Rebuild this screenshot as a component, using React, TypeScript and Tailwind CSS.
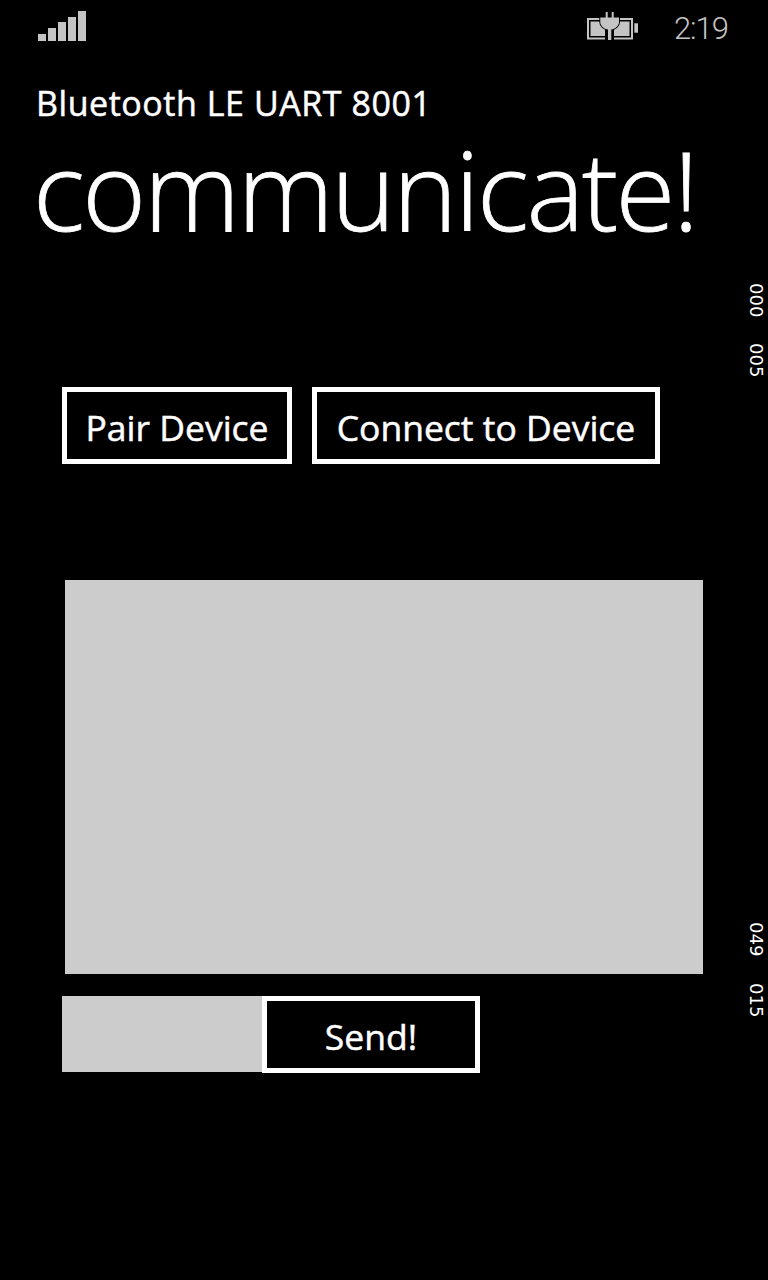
const font = "font-['Open_Sans','Noto_Sans',sans-serif]";

function SignalBars() {
  return (
    <div className="flex items-end gap-[2px]">
      <div className="h-[7px] w-[8px] bg-[#c4c4c4]" />
      <div className="h-[13px] w-[8px] bg-[#c4c4c4]" />
      <div className="h-[19px] w-[8px] bg-[#c4c4c4]" />
      <div className="h-[24px] w-[8px] bg-[#c4c4c4]" />
      <div className="h-[30px] w-[8px] bg-[#c4c4c4]" />
    </div>
  );
}

function BatteryIcon() {
  return (
    <svg width="60" height="36" viewBox="0 0 60 36" fill="#c4c4c4">
      <path d="M4 10H17V12H6V29.5H22V31.5H4Z" />
      <path d="M36 10H50V31.5H31V29.5H48V12H36Z" />
      <rect x="7.5" y="13.5" width="14.5" height="14.5" />
      <rect x="31" y="13.5" width="15.5" height="14.5" />
      <rect x="51.3" y="15.3" width="3.7" height="9.4" />
      <path
        d="M22.7 4H24.7V9.5H28.7V4H30.7V9.5H36V14C36 18 32 21 28.3 21.5V32H25V21.5C21 21 17.3 18 17.3 14V9.5H22.7Z"
        stroke="#000"
        strokeWidth="2"
        paintOrder="stroke"
      />
    </svg>
  );
}

function OutlineButton({ label, className }: { label: string; className: string }) {
  return (
    <button className={`h-[77px] border-[5px] border-white bg-black pt-[3px] text-[35.5px] leading-[40px] text-white [-webkit-text-stroke:0.5px_white] ${className}`}>
      {label}
    </button>
  );
}

export default function App() {
  return (
    <div className={`relative h-[1280px] w-[768px] overflow-hidden bg-black text-white ${font}`}>
      {/* status bar */}
      <div className="flex h-[48px] items-start justify-between pl-[38px] pr-[40px]">
        <div className="pt-[11px]">
          <SignalBars />
        </div>
        <div className="flex items-start">
          <div className="pt-[8px]">
            <BatteryIcon />
          </div>
          <span className="ml-[31px] pt-[8px] font-['Roboto',sans-serif] text-[31px] leading-[42px] font-light tracking-[-1px] text-[#c4c4c4]">2:19</span>
        </div>
      </div>

      <div className="pl-[36px] pt-[32px] text-[34px] leading-[46px] tracking-[0.55px] whitespace-nowrap [-webkit-text-stroke:0.5px_white]">
        Bluetooth LE UART 8001
      </div>
      <div className="ml-[33px] mt-[4px] h-[117px] text-[109px] leading-[117px] font-light tracking-[-2.5px] whitespace-nowrap [-webkit-text-stroke:0.8px_white]">
        communicate!
      </div>

      <div className="mt-[140px] flex gap-[20px] pl-[62px]">
        <OutlineButton label="Pair Device" className="w-[230px]" />
        <OutlineButton label="Connect to Device" className="w-[348px]" />
      </div>

      <div className="ml-[65px] mt-[116px] h-[394px] w-[638px] bg-[#cccccc]" />

      <div className="ml-[62px] mt-[22px] flex">
        <div className="h-[76px] w-[200px] bg-[#cccccc]" />
        <OutlineButton label="Send!" className="w-[218px]" />
      </div>

      {/* frame rate counters */}
      <span className="absolute left-[746px] top-[283px] font-['DejaVu_Sans',sans-serif] text-[18px] leading-[20px] [writing-mode:vertical-rl]">000</span>
      <span className="absolute left-[746px] top-[343px] font-['DejaVu_Sans',sans-serif] text-[18px] leading-[20px] [writing-mode:vertical-rl]">005</span>
      <span className="absolute left-[746px] top-[922px] font-['DejaVu_Sans',sans-serif] text-[18px] leading-[20px] [writing-mode:vertical-rl]">049</span>
      <span className="absolute left-[746px] top-[983px] font-['DejaVu_Sans',sans-serif] text-[18px] leading-[20px] [writing-mode:vertical-rl]">015</span>
    </div>
  );
}
